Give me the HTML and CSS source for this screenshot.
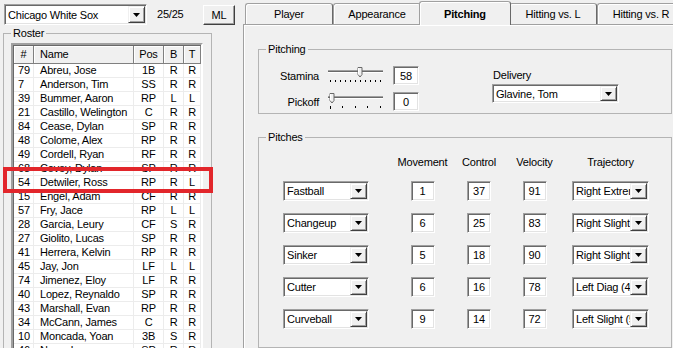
FILE: index.html
```html
<!DOCTYPE html>
<html lang="en">
<head>
    <meta charset="UTF-8">
    <title>Roster - Pitching</title>
    <link rel="stylesheet" href="styles.css">
</head>
<body>
    <div class="app">
        <div class="side">
            <div class="team-bar">
                <div class="combo team-combo">
                    <span class="combo-text">Chicago White Sox</span>
                    <span class="combo-btn"><svg width="7" height="4" viewBox="0 0 7 4"><path d="M0 0h7L3.5 4z"/></svg></span>
                </div>
                <span class="count">25/25</span>
                <button class="btn">ML</button>
            </div>

            <fieldset class="group roster">
                <legend>Roster</legend>
                <div class="list">
                    <div class="list-row list-head">
                        <span class="c-num">#</span>
                        <span class="c-name">Name</span>
                        <span class="c-mid">Pos</span>
                        <span class="c-mid">B</span>
                        <span class="c-mid">T</span>
                    </div>
                    <div id="rosterRows"></div>
                </div>
            </fieldset>
        </div>

        <div class="tab-control">
            <div class="tab-strip">
                <div class="tab">Player</div>
                <div class="tab">Appearance</div>
                <div class="tab active">Pitching</div>
                <div class="tab">Hitting vs. L</div>
                <div class="tab">Hitting vs. R</div>
            </div>
            <div class="panel">
                <fieldset class="group">
                    <legend>Pitching</legend>
                    <div class="pitching-body">
                        <div class="ratings">
                            <span class="rating-label">Stamina</span>
                            <svg class="slider" width="58" height="17" viewBox="0 0 58 17">
                                <rect x="1" y="3" width="55" height="1" fill="#a0a0a0"/>
                                <rect x="1" y="4" width="55" height="1" fill="#696969"/>
                                <rect x="1" y="5" width="55" height="1" fill="#fff"/>
                                <g fill="#000">
                                    <rect x="3" y="13" width="1" height="2"/><rect x="8" y="13" width="1" height="2"/>
                                    <rect x="13" y="13" width="1" height="2"/><rect x="18" y="13" width="1" height="2"/>
                                    <rect x="23" y="13" width="1" height="2"/><rect x="28" y="13" width="1" height="2"/>
                                    <rect x="33" y="13" width="1" height="2"/><rect x="38" y="13" width="1" height="2"/>
                                    <rect x="43" y="13" width="1" height="2"/><rect x="48" y="13" width="1" height="2"/>
                                    <rect x="53" y="13" width="1" height="2"/>
                                </g>
                                <path d="M31 0.5h4v7l-2 2.5l-2-2.5z" fill="#f0f0f0" stroke="#696969" stroke-width="1"/>
                                <path d="M31.5 1v6.5" stroke="#fff"/>
                            </svg>
                            <span class="num">58</span>

                            <span class="rating-label">Pickoff</span>
                            <svg class="slider" width="58" height="17" viewBox="0 0 58 17">
                                <rect x="1" y="3" width="55" height="1" fill="#a0a0a0"/>
                                <rect x="1" y="4" width="55" height="1" fill="#696969"/>
                                <rect x="1" y="5" width="55" height="1" fill="#fff"/>
                                <g fill="#000">
                                    <rect x="3" y="13" width="1" height="3"/><rect x="15" y="13" width="1" height="2"/>
                                    <rect x="28" y="13" width="1" height="2"/><rect x="40" y="13" width="1" height="2"/>
                                    <rect x="53" y="13" width="1" height="2"/>
                                </g>
                                <path d="M3 0.5h4v7l-2 2.5l-2-2.5z" fill="#f0f0f0" stroke="#696969" stroke-width="1"/>
                                <path d="M3.5 1v6.5" stroke="#fff"/>
                            </svg>
                            <span class="num">0</span>
                        </div>
                        <div class="delivery">
                            <div class="delivery-label">Delivery</div>
                            <div class="combo delivery-combo">
                                <span class="combo-text">Glavine, Tom</span>
                                <span class="combo-btn"><svg width="7" height="4" viewBox="0 0 7 4"><path d="M0 0h7L3.5 4z"/></svg></span>
                            </div>
                        </div>
                    </div>
                </fieldset>

                <fieldset class="group pitches">
                    <legend>Pitches</legend>
                    <div class="pitch-grid" id="pitchGrid">
                        <span></span>
                        <span class="col-head">Movement</span>
                        <span class="col-head">Control</span>
                        <span class="col-head">Velocity</span>
                        <span class="col-head">Trajectory</span>
                    </div>
                </fieldset>
            </div>
        </div>

        <div class="mark"></div>
    </div>

    <script>
        // Roster rows: number, name, position, bats, throws
        const roster = [
            ['79', 'Abreu, Jose', '1B', 'R', 'R'],
            ['7', 'Anderson, Tim', 'SS', 'R', 'R'],
            ['39', 'Bummer, Aaron', 'RP', 'L', 'L'],
            ['21', 'Castillo, Welington', 'C', 'R', 'R'],
            ['84', 'Cease, Dylan', 'SP', 'R', 'R'],
            ['48', 'Colome, Alex', 'RP', 'R', 'R'],
            ['49', 'Cordell, Ryan', 'RF', 'R', 'R'],
            ['68', 'Covey, Dylan', 'SP', 'R', 'R'],
            ['54', 'Detwiler, Ross', 'RP', 'R', 'L'],
            ['15', 'Engel, Adam', 'CF', 'R', 'R'],
            ['57', 'Fry, Jace', 'RP', 'L', 'L'],
            ['28', 'Garcia, Leury', 'CF', 'S', 'R'],
            ['27', 'Giolito, Lucas', 'SP', 'R', 'R'],
            ['41', 'Herrera, Kelvin', 'RP', 'R', 'R'],
            ['45', 'Jay, Jon', 'LF', 'L', 'L'],
            ['74', 'Jimenez, Eloy', 'LF', 'R', 'R'],
            ['40', 'Lopez, Reynaldo', 'SP', 'R', 'R'],
            ['43', 'Marshall, Evan', 'RP', 'R', 'R'],
            ['34', 'McCann, James', 'C', 'R', 'R'],
            ['10', 'Moncada, Yoan', '3B', 'S', 'R'],
            ['46', 'Nova, Ivan', 'SP', 'R', 'R']
        ];

        const rosterRows = document.getElementById('rosterRows');
        for (const [num, name, pos, bats, throws] of roster) {
            const row = document.createElement('div');
            row.className = 'list-row';
            row.innerHTML = `
                <span class="c-num">${num}</span>
                <span class="c-name">${name}</span>
                <span class="c-mid">${pos}</span>
                <span class="c-mid">${bats}</span>
                <span class="c-mid">${throws}</span>
            `;
            rosterRows.appendChild(row);
        }

        // Pitch repertoire: pitch, movement, control, velocity, trajectory
        const pitches = [
            ['Fastball', 1, 37, 91, 'Right Extreme'],
            ['Changeup', 6, 25, 83, 'Right Slight'],
            ['Sinker', 5, 18, 90, 'Right Slight'],
            ['Cutter', 6, 16, 78, 'Left Diag (45)'],
            ['Curveball', 9, 14, 72, 'Left Slight (5)']
        ];

        const arrow = '<span class="combo-btn"><svg width="7" height="4" viewBox="0 0 7 4"><path d="M0 0h7L3.5 4z"/></svg></span>';
        const pitchGrid = document.getElementById('pitchGrid');
        for (const [pitch, movement, control, velocity, trajectory] of pitches) {
            pitchGrid.insertAdjacentHTML('beforeend', `
                <div class="combo pitch-combo"><span class="combo-text">${pitch}</span>${arrow}</div>
                <span class="num small">${movement}</span>
                <span class="num small">${control}</span>
                <span class="num small">${velocity}</span>
                <div class="combo traj-combo"><span class="combo-text">${trajectory}</span>${arrow}</div>
            `);
        }
    </script>
</body>
</html>
```

FILE: styles.css
```css
* {
    box-sizing: border-box;
}
body {
    margin: 0;
    background-color: #f0f0f0;
    font-family: "Liberation Sans", Arial, sans-serif;
    font-size: 11px;
    letter-spacing: -0.2px;
    color: #000;
}
.app {
    position: relative;
    display: flex;
    width: 673px;
    height: 348px;
    overflow: hidden;
}
.side {
    width: 243px;
    flex: none;
}

/* top bar */
.team-bar {
    display: flex;
    align-items: flex-start;
    padding: 4px 0 0 4px;
    height: 27px;
}
.team-combo {
    width: 143px;
    height: 21px;
}
.count {
    width: 46px;
    margin-left: 10px;
    line-height: 21px;
}
.btn {
    width: 32px;
    height: 20px;
    margin-top: 1px;
    padding: 0;
    font: inherit;
    letter-spacing: inherit;
    background-color: #f0f0f0;
    border: 1px solid;
    border-color: #fff #404040 #404040 #fff;
    box-shadow: inset -1px -1px 0 #a0a0a0;
}

/* combo boxes and edit boxes */
.combo {
    display: flex;
    background-color: #fff;
    border: 1px solid;
    border-color: #a0a0a0 #fff #fff #a0a0a0;
    box-shadow: inset 1px 1px 0 #696969, inset -1px -1px 0 #e3e3e3;
    padding: 1px;
}
.combo-text {
    flex: 1;
    min-width: 0;
    padding-left: 2px;
    overflow: hidden;
    white-space: nowrap;
    display: flex;
    align-items: center;
}
.combo-btn {
    width: 17px;
    flex: none;
    display: flex;
    align-items: center;
    justify-content: center;
    background-color: #f0f0f0;
    border: 1px solid;
    border-color: #f0f0f0 #404040 #404040 #f0f0f0;
    box-shadow: inset 1px 1px 0 #fff, inset -1px -1px 0 #a0a0a0;
}
.num {
    display: flex;
    align-items: center;
    justify-content: center;
    width: 26px;
    height: 19px;
    background-color: #fff;
    border: 1px solid;
    border-color: #a0a0a0 #fff #fff #a0a0a0;
    box-shadow: inset 1px 1px 0 #696969, inset -1px -1px 0 #e3e3e3;
}
.num.small {
    width: 24px;
    height: 20px;
}

/* group boxes */
.group {
    margin: 0;
    padding: 0;
    min-width: 0;
    border: 1px solid #b4b4b4;
}
.group legend {
    margin-left: 7px;
    padding: 0 2px;
    line-height: 13px;
}

/* roster list */
.roster {
    margin: 0 0 0 3px;
    width: 209px;
    height: 360px;
}
.list {
    margin: 3px 0 0 7px;
    width: 192px;
    height: 330px;
    background-color: #fff;
    border: 2px solid;
    border-color: #a0a0a0 #fff #fff #a0a0a0;
    box-shadow: inset 1px 1px 0 #696969;
    padding: 1px 0 0 1px;
}
.list-row {
    display: grid;
    grid-template-columns: 20px 100px 30px 20px 17px;
    height: 14px;
    line-height: 13px;
}
.list-row span {
    border-right: 1px solid #ececec;
    border-bottom: 1px solid #ececec;
    white-space: nowrap;
    overflow: hidden;
}
.list-head {
    height: 18px;
    line-height: 16px;
}
.list-head span {
    background-color: #f0f0f0;
    border-right: 1px solid #808080;
    border-bottom: 1px solid #808080;
    box-shadow: inset 1px 1px 0 #fff;
}
.c-num {
    padding-left: 4px;
}
.list-head .c-num {
    padding-left: 0;
    text-align: center;
}
.c-name {
    padding-left: 6px;
}
.c-mid {
    text-align: center;
}

/* red highlight over the selected player */
.mark {
    position: absolute;
    left: 3px;
    top: 167px;
    width: 210px;
    height: 26px;
    border: 4px solid #e2262b;
}

/* tabs */
.tab-control {
    flex: 1;
    display: flex;
    flex-direction: column;
}
.tab-strip {
    position: relative;
    z-index: 1;
    display: flex;
    align-items: flex-end;
    height: 25px;
    padding-left: 2px;
}
.tab {
    flex: none;
    width: 88px;
    height: 21px;
    line-height: 21px;
    text-align: center;
    background-color: #f0f0f0;
    border: 1px solid #a0a0a0;
    border-right-color: #696969;
    border-bottom: none;
    border-radius: 3px 3px 0 0;
    box-shadow: inset 1px 1px 0 #fff;
    white-space: nowrap;
}
.tab.active {
    position: relative;
    width: 92px;
    height: 24px;
    line-height: 25px;
    margin: 0 -2px -1px;
    font-weight: bold;
}
.panel {
    flex: 1;
    border-top: 1px solid #a0a0a0;
    border-left: 1px solid #a0a0a0;
    box-shadow: inset 1px 1px 0 #fff;
    padding: 18px 0 0 14px;
}
.panel .group {
    width: 414px;
}

/* pitching ratings */
.pitching-body {
    display: flex;
    height: 57px;
    padding: 10px 0 0 8px;
}
.ratings {
    display: grid;
    grid-template-columns: 52px 58px 26px;
    grid-template-rows: 19px 19px;
    column-gap: 8px;
    row-gap: 7px;
    align-items: center;
}
.rating-label {
    text-align: right;
}
.slider {
    align-self: start;
    margin-top: 1px;
}
.delivery {
    margin-left: 73px;
    padding-top: 3px;
}
.delivery-label {
    line-height: 13px;
    margin-left: 1px;
}
.delivery-combo {
    width: 127px;
    height: 19px;
    margin-top: 2px;
}

/* pitches */
.pitches {
    margin-top: 17px;
}
.pitch-grid {
    display: grid;
    grid-template-columns: 114px 51px 62px 49px 103px;
    grid-auto-rows: 20px;
    grid-template-rows: 13px;
    row-gap: 12px;
    justify-items: center;
    align-items: center;
    padding: 12px 0 18px 24px;
}
.pitch-grid > :first-child {
    margin-bottom: -2px;
}
.col-head {
    line-height: 13px;
    align-self: start;
}
.pitch-grid .col-head {
    margin-bottom: -3px;
}
.pitch-combo {
    justify-self: start;
    width: 86px;
    height: 20px;
}
.traj-combo {
    width: 77px;
    height: 20px;
}
```
